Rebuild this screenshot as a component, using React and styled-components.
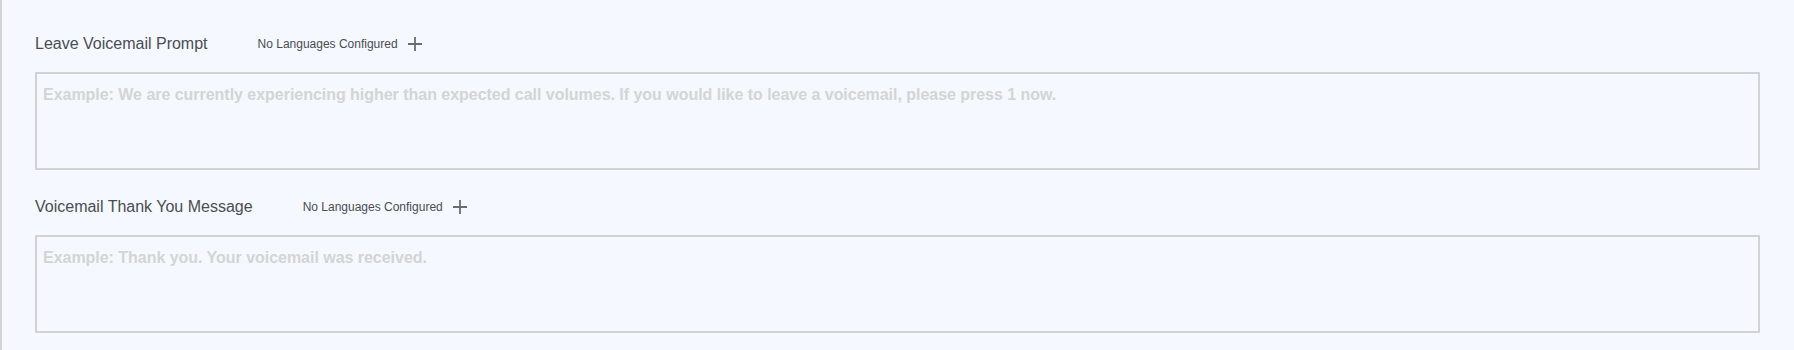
import React from 'react';
import styled, { createGlobalStyle } from 'styled-components';

const GlobalStyle = createGlobalStyle`
  html, body {
    margin: 0;
    padding: 0;
    background: #f5f8fe;
  }
  body {
    font-family: 'Liberation Sans', Arial, sans-serif;
  }
`;

const Page = styled.div`
  min-height: 350px;
  box-sizing: border-box;
  border-left: 2px solid #d3d3d3;
  padding: 34px 34px 0 33px;
  background: #f5f8fe;
`;

const Section = styled.section`
  & + & {
    margin-top: 27px;
  }
`;

const Header = styled.div`
  display: flex;
  align-items: center;
  height: 20px;
`;

const Title = styled.h3`
  margin: 0 50px 0 0;
  font-size: 16px;
  font-weight: normal;
  color: #4b4d52;
  line-height: 20px;
`;

const Languages = styled.span`
  font-size: 12px;
  color: #4b4d52;
  line-height: 20px;
`;

const AddButton = styled.button`
  display: flex;
  align-items: center;
  justify-content: center;
  margin-left: 8px;
  padding: 0;
  width: 18px;
  height: 18px;
  border: none;
  background: none;
  cursor: pointer;
  color: #6a6c70;
`;

const Prompt = styled.textarea`
  display: block;
  box-sizing: border-box;
  width: 100%;
  height: 98px;
  margin-top: 18px;
  padding: 11px 6px;
  border: 2px solid #d2d2d2;
  border-radius: 0;
  background: transparent;
  resize: none;
  font-family: 'Liberation Sans', Arial, sans-serif;
  font-size: 16px;
  font-weight: bold;
  letter-spacing: -0.03px;
  line-height: 20px;
  color: #4b4d52;
  outline: none;

  &::placeholder {
    color: #d4d4d4;
  }
`;

function PlusIcon() {
  return (
    <svg width="14" height="14" viewBox="0 0 14 14">
      <path d="M7 0v14M0 7h14" stroke="currentColor" strokeWidth="1.8" />
    </svg>
  );
}

const prompts = [
  {
    title: 'Leave Voicemail Prompt',
    placeholder:
      'Example: We are currently experiencing higher than expected call volumes. If you would like to leave a voicemail, please press 1 now.',
  },
  {
    title: 'Voicemail Thank You Message',
    placeholder: 'Example: Thank you. Your voicemail was received.',
  },
];

export default function App() {
  return (
    <>
      <GlobalStyle />
      <Page>
        {prompts.map((p) => (
          <Section key={p.title}>
            <Header>
              <Title>{p.title}</Title>
              <Languages>No Languages Configured</Languages>
              <AddButton aria-label="Add language">
                <PlusIcon />
              </AddButton>
            </Header>
            <Prompt placeholder={p.placeholder} />
          </Section>
        ))}
      </Page>
    </>
  );
}
